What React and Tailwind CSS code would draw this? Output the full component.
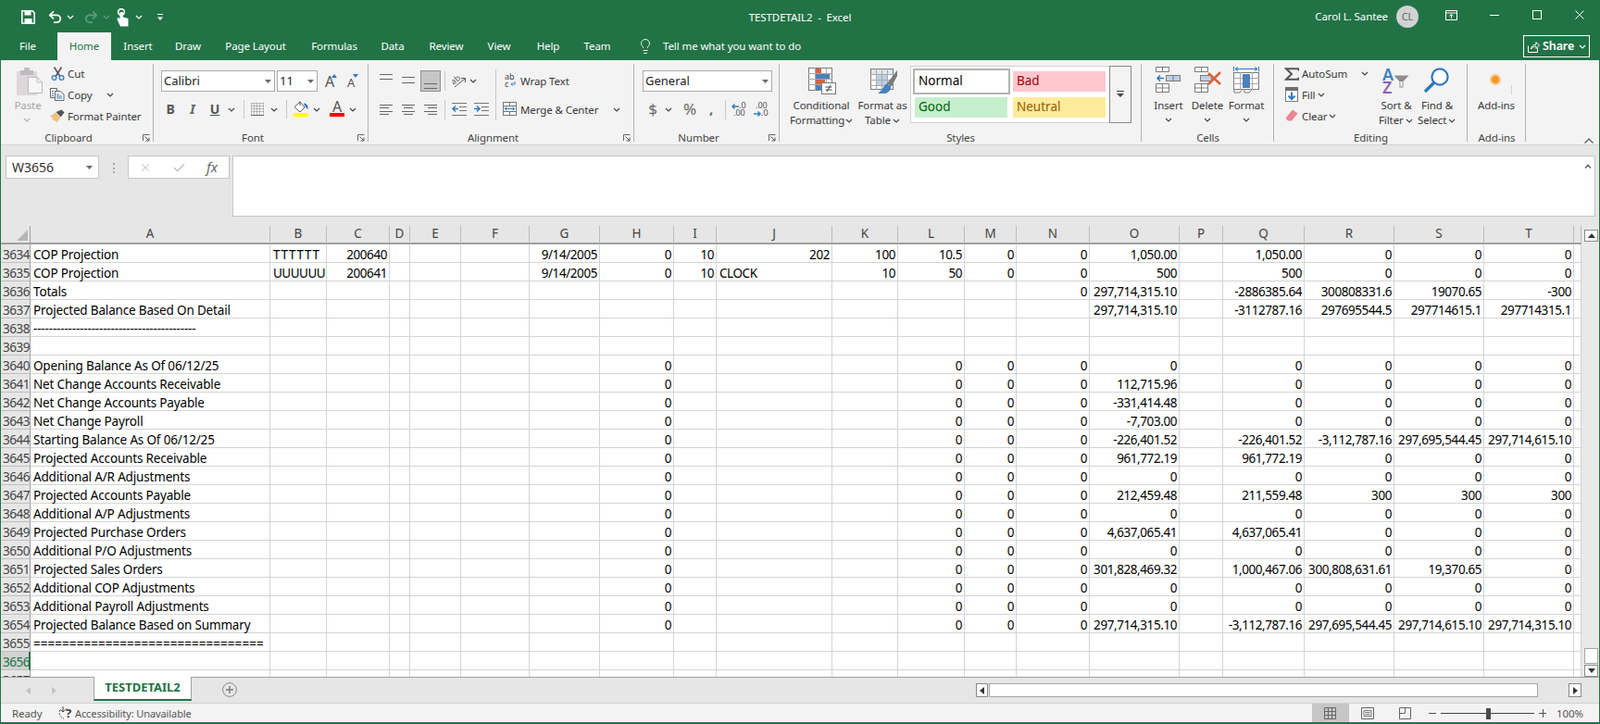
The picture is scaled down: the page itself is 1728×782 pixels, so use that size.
import React from "react";
import { Undo2, Redo2, Lightbulb, X, Check } from "lucide-react";

const L = ({ c = "", children }) => (
  <div className={"absolute whitespace-nowrap text-[11.5px] leading-[16px] tracking-[-0.1px] text-[#383838] " + c}>{children}</div>
);
const Ch = ({ c = "", light }) => (
  <svg className={"absolute " + c} width="8" height="5" viewBox="0 0 8 5">
    <path d="M1 1L4 4L7 1" fill="none" stroke={light ? "#b0b0b0" : "#444"} strokeWidth="1.2" />
  </svg>
);
const Ca = ({ c = "" }) => (
  <svg className={"absolute " + c} width="7" height="4" viewBox="0 0 7 4">
    <path d="M0 0H7L3.5 4Z" fill="#6a6a6a" />
  </svg>
);
const Ic = ({ c = "", w, h, children }) => (
  <svg className={"absolute " + c} width={w} height={h} viewBox={`0 0 ${w} ${h}`}>{children}</svg>
);
const Sep = ({ c = "" }) => <div className={"absolute w-px bg-[#c8c8c8] " + c} />;
const LinesIc = ({ c, rows, w = 14, h = 14 }) => (
  <Ic c={c} w={w} h={h}>
    {rows.map((r, i) => (
      <path key={i} d={`M${r[0]} ${r[2]}.5H${r[1]}`} stroke="#666" strokeWidth="1" />
    ))}
  </Ic>
);
const Launcher = () => (
  <Ic c="right-[4px] top-[80px]" w={8} h={8}>
    <path d="M0.5 7V0.5H7.5" fill="none" stroke="#666" />
    <path d="M2.5 2.5L7 7M7 3.5V7H3.5" fill="none" stroke="#555" />
  </Ic>
);
const Group = ({ w, label, launcher, labelC = "left-0 right-[18px]", children }) => (
  <div className={"relative h-full shrink-0 " + w}>
    {children}
    <div className="absolute right-0 top-[4px] h-[84px] w-px bg-[#b4b4b4]" />
    <div className={"absolute top-[76px] text-center text-[11.5px] leading-[16px] tracking-[-0.1px] text-[#444] " + labelC}>{label}</div>
    {launcher && <Launcher />}
  </div>
);

const BLUE = "#2f78bd";
const GR = "#7a7a7a";

function Ribbon() {
  return (
    <div className="relative flex h-[92px] border-b border-[#d2d2d2] bg-[#f3f3f3]">
      <Group w="w-[166px]" label="Clipboard" launcher>
        <Ic c="left-[18px] top-[8px]" w={28} h={30}>
          <rect x="0" y="4" width="22" height="26" rx="1" fill="#dcd8db" />
          <rect x="4" y="3" width="14" height="5" fill="#bfbbbe" />
          <rect x="8" y="0" width="6" height="4" rx="1" fill="#bfbbbe" />
          <path d="M12.5 10.5H22L27.5 16V27.5H12.5Z" fill="#f8f7f8" stroke="#bcbabc" />
          <path d="M22 10.5V16H27.5" fill="none" stroke="#bcbabc" />
        </Ic>
        <L c="left-[30px] -translate-x-1/2 top-[41px] !text-[#a6a6a6]">Paste</L>
        <Ch light c="left-[25px] top-[62px]" />
        <Ic c="left-[55px] top-[7px]" w={15} h={15}>
          <path d="M3.5 0.5L9.5 10M11.5 0.5L5.5 10" stroke="#555" strokeWidth="1.6" fill="none" />
          <circle cx="3.5" cy="12" r="2.4" fill="none" stroke={BLUE} strokeWidth="1.2" />
          <circle cx="11.5" cy="12" r="2.4" fill="none" stroke={BLUE} strokeWidth="1.2" />
        </Ic>
        <L c="left-[73px] top-[7px]">Cut</L>
        <Ic c="left-[54px] top-[30px]" w={16} h={14}>
          <path d="M0.5 0.5H7.5V3M5 10.5H0.5V0.5" fill="none" stroke="#666" />
          <path d="M5.5 3.5H11L15 7V13.5H5.5Z" fill="#fff" stroke="#666" />
          <path d="M2 3.5H4M2 6H4M2 8.5H4M7 7H10M7 9H13M7 11H13" stroke={BLUE} />
        </Ic>
        <L c="left-[73px] top-[30px]">Copy</L>
        <Ch c="left-[115px] top-[35px]" />
        <Ic c="left-[54px] top-[53px]" w={16} h={15}>
          <path d="M0 7.5L6 3.5L11 9L7.5 14.5L4 11.5L2.5 12L3 9.5Z" fill="#eec07c" />
          <path d="M6.5 3L12.5 0.5L15.5 3.5L11.5 8.5Z" fill="#555" />
        </Ic>
        <L c="left-[73px] top-[53px]">Format Painter</L>
      </Group>

      <Group w="w-[232px]" label="Font" launcher>
        <div className="absolute left-[8px] top-[11px] h-[23px] w-[123px] border border-[#ababab] bg-white pl-[2px] font-['Lato',sans-serif] text-[13px] leading-[21px] text-[#222]">Calibri</div>
        <Ca c="left-[120px] top-[21px]" />
        <div className="absolute left-[133px] top-[11px] h-[23px] w-[44px] border border-[#ababab] bg-white pl-[2px] font-['Lato',sans-serif] text-[13px] leading-[21px] text-[#222]">11</div>
        <Ca c="left-[166px] top-[21px]" />
        <L c="left-[190px] -translate-x-1/2 top-[15px] !text-[16px] !text-[#555]">A</L>
        <Ic c="left-[192px] top-[15px]" w={6} h={4}><path d="M0 4L3 0L6 4Z" fill={BLUE} /></Ic>
        <L c="left-[213px] -translate-x-1/2 top-[16px] !text-[13px] !text-[#555]">A</L>
        <Ic c="left-[215px] top-[15px]" w={6} h={4}><path d="M0 0H6L3 4Z" fill={BLUE} /></Ic>
        <L c="left-[18px] -translate-x-1/2 top-[45px] !text-[14px] font-bold !text-[#555]">B</L>
        <L c="left-[42px] -translate-x-1/2 top-[45px] !text-[14px] font-bold italic !text-[#666]">I</L>
        <L c="left-[66px] -translate-x-1/2 top-[45px] !text-[14px] font-bold underline !text-[#555]">U</L>
        <Ch c="left-[80px] top-[51px]" />
        <Sep c="left-[97px] top-[43px] h-[20px]" />
        <Ic c="left-[105px] top-[46px]" w={14} h={14}>
          <path d="M0.5 0.5H13.5M0.5 3.5H13.5M0.5 6.5H13.5M0.5 9.5H13.5M0.5 0.5V13M3.5 0.5V13M6.5 0.5V13M9.5 0.5V13M13.5 0.5V13" stroke="#8a8a8a" strokeDasharray="1 1" fill="none" />
          <path d="M0 13.5H14" stroke="#666" />
        </Ic>
        <Ch c="left-[126px] top-[51px]" />
        <Sep c="left-[143px] top-[43px] h-[20px]" />
        <Ic c="left-[151px] top-[44px]" w={17} h={13}>
          <path d="M1 6.5L7 1L12 7L7 12Z" fill="#fff" stroke="#555" />
          <path d="M7 0.5V5" stroke="#555" />
          <path d="M11 2.5C14 2.5 16 5 15.5 9C14 8 12 6 11 2.5Z" fill={BLUE} />
        </Ic>
        <div className="absolute left-[151px] top-[57px] h-[4px] w-[16px] bg-[#ffff00]" />
        <Ch c="left-[172px] top-[51px]" />
        <L c="left-[198px] -translate-x-1/2 top-[42px] !text-[16px] !text-[#555]">A</L>
        <div className="absolute left-[190px] top-[57px] h-[4px] w-[16px] bg-[#ff0000]" />
        <Ch c="left-[211px] top-[51px]" />
      </Group>

      <Group w="w-[287px]" label="Alignment" launcher>
        <LinesIc c="left-[12px] top-[12px]" rows={[[0, 14, 3], [0, 14, 8]]} />
        <LinesIc c="left-[36px] top-[15px]" rows={[[0, 14, 3], [0, 14, 9]]} />
        <div className="absolute left-[56px] top-[11px] h-[23px] w-[22px] border border-[#8e8e8e] bg-[#c6c6c6]" />
        <LinesIc c="left-[60px] top-[18px]" rows={[[0, 14, 7], [0, 14, 12]]} />
        <Sep c="left-[82px] top-[12px] h-[21px]" />
        <Ic c="left-[90px] top-[15px]" w={16} h={15}>
          <text x="0" y="9" fontSize="9" fill="#555" transform="rotate(-40 5 8)" fontFamily="Open Sans, sans-serif">ab</text>
          <path d="M3 14L14 5M10 4.5H14.5V9" fill="none" stroke="#555" />
        </Ic>
        <Ch c="left-[109px] top-[20px]" />
        <Sep c="left-[137px] top-[10px] h-[55px]" />
        <div className="absolute left-[147px] top-[14px] w-[12px] font-['Open_Sans',sans-serif] text-[9px] leading-[8px] text-[#444]">ab<br />c</div>
        <Ic c="left-[153px] top-[23px]" w={6} h={6}><path d="M5 0V3H1M2.5 1.5L1 3L2.5 4.5" fill="none" stroke={BLUE} /></Ic>
        <L c="left-[164px] top-[15px]">Wrap Text</L>
        <LinesIc c="left-[12px] top-[47px]" rows={[[0, 14, 1], [0, 10, 4], [0, 14, 8], [0, 10, 11]]} />
        <LinesIc c="left-[36px] top-[47px]" rows={[[0, 14, 1], [2, 12, 4], [0, 14, 8], [2, 12, 11]]} />
        <LinesIc c="left-[60px] top-[47px]" rows={[[0, 14, 1], [4, 14, 4], [0, 14, 8], [4, 14, 11]]} />
        <Sep c="left-[82px] top-[43px] h-[21px]" />
        <Ic c="left-[90px] top-[46px]" w={16} h={14}>
          <path d="M0 .5H16M8 4.5H16M8 8.5H16M0 13.5H16" stroke="#777" />
          <path d="M7 6.5H1M4 3.5L1 6.5L4 9.5" fill="none" stroke={BLUE} strokeWidth="1.5" />
        </Ic>
        <Ic c="left-[114px] top-[46px]" w={16} h={14}>
          <path d="M0 .5H16M8 4.5H16M8 8.5H16M0 13.5H16" stroke="#777" />
          <path d="M0 6.5H6M3 3.5L6 6.5L3 9.5" fill="none" stroke={BLUE} strokeWidth="1.5" />
        </Ic>
        <Ic c="left-[145px] top-[45px]" w={15} h={15}>
          <rect x=".5" y=".5" width="14" height="14" fill="#fff" stroke="#777" />
          <path d="M0 4.5H15M0 10.5H15M7.5 0V4M7.5 11V15" stroke="#777" />
          <path d="M2.5 7.5H12.5M4.5 5.5L2.5 7.5L4.5 9.5M10.5 5.5L12.5 7.5L10.5 9.5" fill="none" stroke={BLUE} />
        </Ic>
        <L c="left-[164px] top-[46px]">Merge &amp; Center</L>
        <Ch c="left-[264px] top-[51px]" />
      </Group>

      <Group w="w-[157px]" label="Number" launcher>
        <div className="absolute left-[9px] top-[11px] h-[23px] w-[140px] border border-[#ababab] bg-white pl-[2px] font-['Lato',sans-serif] text-[13px] leading-[21px] text-[#222]">General</div>
        <Ca c="left-[138px] top-[21px]" />
        <L c="left-[20px] -translate-x-1/2 top-[45px] !text-[17px] !text-[#666]">$</L>
        <Ch c="left-[33px] top-[51px]" />
        <L c="left-[60px] -translate-x-1/2 top-[45px] !text-[17px] !text-[#666]">%</L>
        <L c="left-[83px] -translate-x-1/2 top-[44px] !text-[15px] font-bold !text-[#666]">,</L>
        <Sep c="left-[98px] top-[43px] h-[21px]" />
        <Ic c="left-[105px] top-[47px]" w={8} h={6}><path d="M8 3H1M3.5 .5L1 3L3.5 5.5" fill="none" stroke={BLUE} strokeWidth="1.4" /></Ic>
        <div className="absolute left-[113px] top-[45px] font-['Open_Sans',sans-serif] text-[9px] leading-[8px] text-[#555]">.0</div>
        <div className="absolute left-[107px] top-[53px] font-['Open_Sans',sans-serif] text-[9px] leading-[8px] text-[#555]">.00</div>
        <div className="absolute left-[131px] top-[45px] font-['Open_Sans',sans-serif] text-[9px] leading-[8px] text-[#555]">.00</div>
        <Ic c="left-[129px] top-[55px]" w={8} h={6}><path d="M0 3H7M4.5 .5L7 3L4.5 5.5" fill="none" stroke={BLUE} strokeWidth="1.4" /></Ic>
        <div className="absolute left-[137px] top-[53px] font-['Open_Sans',sans-serif] text-[9px] leading-[8px] text-[#555]">.0</div>
      </Group>

      <Group w="w-[391px]" label="Styles" labelC="left-0 right-0">
        <Ic c="left-[31px] top-[8px]" w={30} h={29}>
          <rect x=".5" y=".5" width="25" height="24" fill="#fff" stroke={GR} />
          <path d="M0 6.5H26M0 12.5H26M0 18.5H26M7.5 0V25M13.5 0V25M19.5 0V25" stroke="#a8a8a8" />
          <rect x="8" y="1" width="6" height="5" fill="#d9623c" />
          <rect x="8" y="7" width="15" height="5" fill="#4a80bd" />
          <rect x="8" y="13" width="10" height="5" fill="#d9623c" />
          <rect x="8" y="19" width="6" height="5" fill="#4a80bd" />
          <rect x="14.5" y="16.5" width="15" height="12" fill="#fff" stroke={GR} />
          <path d="M18.5 21H25.5M18.5 24H25.5M24 19L20 26" stroke="#444" fill="none" />
        </Ic>
        <L c="left-[45px] -translate-x-1/2 top-[41px]">Conditional</L>
        <L c="left-[11px] top-[57px]">Formatting</L>
        <Ch c="left-[71px] top-[63px]" />
        <Ic c="left-[98px] top-[9px]" w={29} h={28}>
          <rect x=".5" y=".5" width="24" height="22" fill="#fff" stroke={GR} />
          <rect x="1" y="1" width="23" height="5" fill="#dce6f2" />
          <rect x="6" y="7" width="13" height="11" fill="#bcd0e8" />
          <path d="M0 6.5H25M0 12.5H25M0 18.5H25M6.5 0V23M12.5 0V23M18.5 0V23" stroke="#a8a8a8" />
          <path d="M18 16L25 7L29 2V8L23 19Z" fill="#7a7a7a" />
          <path d="M18 16C14 18 13 24 8 27H16C20 26 23 22 22 19Z" fill="#4a80bd" />
        </Ic>
        <L c="left-[111px] -translate-x-1/2 top-[41px]">Format as</L>
        <L c="left-[92px] top-[57px]">Table</L>
        <Ch c="left-[122px] top-[63px]" />
        <div className="absolute left-[141px] top-[6px] h-[62px] w-[216px] border border-[#d2d2d2] bg-white" />
        <div className="absolute left-[356px] top-[6px] h-[62px] w-[24px] border border-[#8a8a8a] bg-[#f3f3f3]" />
        <Ic c="left-[364px] top-[33px]" w={8} h={8}>
          <path d="M0 .5H8" stroke="#444" /><path d="M0 3L4 7L8 3Z" fill="#444" />
        </Ic>
        <div className="absolute left-[144px] top-[9px] flex h-[28px] w-[105px] items-center border-2 border-[#b3b3b0] bg-white pb-[1px] pl-[4px] font-['Lato',sans-serif] text-[13.5px] text-black">Normal</div>
        <div className="absolute left-[252px] top-[12px] flex h-[22px] w-[100px] items-center bg-[#ffc7ce] pb-[1px] pl-[4px] font-['Lato',sans-serif] text-[13.5px] text-[#9c0006]">Bad</div>
        <div className="absolute left-[146px] top-[40px] flex h-[22px] w-[100px] items-center bg-[#c6efce] pb-[1px] pl-[4px] font-['Lato',sans-serif] text-[13.5px] text-[#006100]">Good</div>
        <div className="absolute left-[252px] top-[40px] flex h-[22px] w-[100px] items-center bg-[#ffeb9c] pb-[1px] pl-[4px] font-['Lato',sans-serif] text-[13.5px] text-[#9c5700]">Neutral</div>
      </Group>

      <Group w="w-[143px]" label="Cells" labelC="left-0 right-0">
        <Ic c="left-[15px] top-[7px]" w={27} h={28}>
          <path d="M.5 .5H14.5V5.5H.5ZM7.5 .5V5.5" fill="#fff" stroke={GR} />
          <rect x="11.5" y="9.5" width="15" height="6" fill="#bcd0e8" stroke={GR} />
          <path d="M19 9.5V15.5" stroke={GR} />
          <path d="M9 12.5H2M5 9.5L2 12.5L5 15.5" fill="none" stroke={BLUE} strokeWidth="1.6" />
          <path d="M.5 18.5H14.5V27.5H.5ZM.5 23H14.5M7.5 18.5V27.5" fill="#fff" stroke={GR} />
        </Ic>
        <L c="left-[29px] -translate-x-1/2 top-[41px]">Insert</L>
        <Ch c="left-[25px] top-[62px]" />
        <Ic c="left-[57px] top-[7px]" w={30} h={28}>
          <path d="M.5 .5H14.5V5.5H.5ZM7.5 .5V5.5" fill="#fff" stroke={GR} />
          <rect x="6.5" y="9.5" width="12" height="6" fill="#bcd0e8" stroke={GR} />
          <path d="M.5 18.5H14.5V27.5H.5ZM.5 23H14.5M7.5 18.5V27.5" fill="#fff" stroke={GR} />
          <path d="M15 7L28 19M28 6L15 19" stroke="#d9623c" strokeWidth="2.6" />
        </Ic>
        <L c="left-[71px] -translate-x-1/2 top-[41px]">Delete</L>
        <Ch c="left-[67px] top-[62px]" />
        <Ic c="left-[99px] top-[7px]" w={28} h={29}>
          <path d="M.5 0V5M27.5 0V5M2 2.5H26M5 .5L2 2.5L5 4.5M23 .5L26 2.5L23 4.5" fill="none" stroke={BLUE} />
          <rect x=".5" y="6.5" width="27" height="18" fill="#fff" stroke={GR} />
          <path d="M0 12.5H28M0 18.5H28M7.5 6V25M20.5 6V25" stroke="#a8a8a8" />
          <rect x="10" y="8" width="8" height="15" fill="#4a80bd" />
          <path d="M1 25V28H7L9 25M12 25V28H17L20 25" fill="#fff" stroke={GR} />
        </Ic>
        <L c="left-[113px] -translate-x-1/2 top-[41px]">Format</L>
        <Ch c="left-[109px] top-[62px]" />
      </Group>

      <Group w="w-[209px]" label="Editing" labelC="left-0 right-0">
        <Ic c="left-[11px] top-[8px]" w={16} h={14}>
          <path d="M15.5 3.5V1.2H2L8 7L2 12.8H15.5V10.5" fill="none" stroke="#555" strokeWidth="2" />
        </Ic>
        <L c="left-[30px] top-[7px]">AutoSum</L>
        <Ch c="left-[94px] top-[12px]" />
        <Ic c="left-[12px] top-[29px]" w={14} h={16}>
          <rect x=".5" y=".5" width="13" height="15" fill="#fff" stroke={GR} />
          <rect x="0" y="0" width="14" height="4" fill="#6d6d6d" />
          <path d="M7 5.5V13M3.5 9.5L7 13L10.5 9.5" fill="none" stroke={BLUE} strokeWidth="2" />
        </Ic>
        <L c="left-[30px] top-[30px]">Fill</L>
        <Ch c="left-[47px] top-[35px]" />
        <Ic c="left-[12px] top-[53px]" w={14} h={13}>
          <path d="M8 0.5L13.5 4.5L7 12.5H3L0.5 9.5Z" fill="#ea8593" />
        </Ic>
        <L c="left-[30px] top-[53px]">Clear</L>
        <Ch c="left-[59px] top-[58px]" />
        <div className="absolute left-[117px] top-[5px] font-['Open_Sans',sans-serif] text-[18px] font-semibold leading-[20px] text-[#3f7fc4]">A</div>
        <div className="absolute left-[117px] top-[19px] font-['Open_Sans',sans-serif] text-[18px] font-semibold leading-[20px] text-[#8e5fb3]">Z</div>
        <Ic c="left-[129px] top-[16px]" w={17} h={14}>
          <path d="M.5 .5H16.5L10.5 7V13.5H6.5V7Z" fill="#8d8d8d" />
          <path d="M7.5 7V12.5H9.5V7" fill="#fff" />
        </Ic>
        <L c="left-[132px] -translate-x-1/2 top-[41px]">Sort &amp;</L>
        <L c="left-[113px] top-[57px]">Filter</L>
        <Ch c="left-[142px] top-[63px]" />
        <Ic c="left-[162px] top-[8px]" w={27} h={27}>
          <circle cx="17" cy="10" r="8.6" fill="#fff" stroke={BLUE} strokeWidth="2.2" />
          <path d="M10.5 16.5L2 25" stroke={BLUE} strokeWidth="3.4" strokeLinecap="round" />
        </Ic>
        <L c="left-[176px] -translate-x-1/2 top-[41px]">Find &amp;</L>
        <L c="left-[155px] top-[57px]">Select</L>
        <Ch c="left-[188px] top-[63px]" />
      </Group>

      <Group w="w-[63px]" label="Add-ins" labelC="left-0 right-0">
        <div className="absolute left-[25px] top-[16px] h-[10px] w-[10px] rounded-full bg-[#f7941d] blur-[1px]" />
        <div className="absolute left-[47px] top-[27px] h-[10px] w-px border-l border-dashed border-[#cfcfcf]" />
        <L c="left-[31px] -translate-x-1/2 top-[41px]">Add-ins</L>
      </Group>

      <Ic c="left-[1711px] top-[84px]" w={10} h={6}>
        <path d="M.5 5.5L5 1L9.5 5.5" fill="none" stroke="#555" strokeWidth="1.2" />
      </Ic>
    </div>
  );
}

function Header() {
  return (
    <div className="relative h-[65px] bg-[#217346] text-white">
      <Ic c="left-[23px] top-[11px]" w={15} h={15}>
        <path d="M.8 .8H12L14.2 3V14.2H.8Z" fill="none" stroke="#fff" strokeWidth="1.6" />
        <rect x="3.5" y="1" width="7" height="4.5" fill="#fff" />
        <rect x="3.5" y="9" width="8" height="5" fill="#fff" />
      </Ic>
      <Undo2 className="absolute left-[51px] top-[10px]" size={17} strokeWidth={2.6} color="#fff" />
      <svg className="absolute left-[72px] top-[16px]" width="8" height="5" viewBox="0 0 8 5"><path d="M1 1L4 4L7 1" fill="none" stroke="#fff" strokeWidth="1.2" /></svg>
      <Redo2 className="absolute left-[90px] top-[10px]" size={17} strokeWidth={2.6} color="#5f9a7d" />
      <svg className="absolute left-[111px] top-[16px]" width="8" height="5" viewBox="0 0 8 5"><path d="M1 1L4 4L7 1" fill="none" stroke="#5f9a7d" strokeWidth="1.2" /></svg>
      <Ic c="left-[126px] top-[9px]" w={13} h={20}>
        <circle cx="5" cy="4" r="3.4" fill="none" stroke="#fff" strokeWidth="1.6" />
        <path d="M3.5 4V11L1 10L0.5 12L4 19.5H12.5V11L7 9.5V4Z" fill="#fff" />
      </Ic>
      <svg className="absolute left-[146px] top-[16px]" width="8" height="5" viewBox="0 0 8 5"><path d="M1 1L4 4L7 1" fill="none" stroke="#fff" strokeWidth="1.2" /></svg>
      <Ic c="left-[170px] top-[15px]" w={6} h={8}>
        <path d="M0 .5H6" stroke="#fff" /><path d="M0 3.5H6L3 7Z" fill="#fff" />
      </Ic>
      <L c="left-[864px] -translate-x-1/2 top-[11px] !text-white whitespace-pre">TESTDETAIL2  -  Excel</L>
      <L c="left-[1499px] -translate-x-full top-[10px] !text-white">Carol L. Santee</L>
      <div className="absolute left-[1508px] top-[6px] flex h-[24px] w-[24px] items-center justify-center rounded-full bg-[#d2d2d2] text-[11px] text-[#666]">CL</div>
      <Ic c="left-[1561px] top-[11px]" w={13} h={11}>
        <path d="M.5 .5H12.5V10.5H.5ZM.5 3H12.5" fill="none" stroke="#fff" />
        <path d="M6.5 9V4.5M4.5 6.5L6.5 4.5L8.5 6.5" fill="none" stroke="#fff" />
      </Ic>
      <div className="absolute left-[1609px] top-[16px] h-px w-[10px] bg-white" />
      <div className="absolute left-[1655px] top-[11px] h-[10px] w-[10px] border border-white" />
      <Ic c="left-[1701px] top-[11px]" w={10} h={10}>
        <path d="M.5 .5L9.5 9.5M9.5 .5L.5 9.5" stroke="#fff" />
      </Ic>
      <div className="absolute left-[62px] top-[35px] h-[30px] w-[58px] bg-[#f3f3f3]" />
      <L c="left-[30px] -translate-x-1/2 top-[42px] !text-white">File</L>
      <L c="left-[91px] -translate-x-1/2 top-[42px] !text-[#217346]">Home</L>
      <L c="left-[149px] -translate-x-1/2 top-[42px] !text-white">Insert</L>
      <L c="left-[203px] -translate-x-1/2 top-[42px] !text-white">Draw</L>
      <L c="left-[276px] -translate-x-1/2 top-[42px] !text-white">Page Layout</L>
      <L c="left-[361px] -translate-x-1/2 top-[42px] !text-white">Formulas</L>
      <L c="left-[424px] -translate-x-1/2 top-[42px] !text-white">Data</L>
      <L c="left-[482px] -translate-x-1/2 top-[42px] !text-white">Review</L>
      <L c="left-[539px] -translate-x-1/2 top-[42px] !text-white">View</L>
      <L c="left-[592px] -translate-x-1/2 top-[42px] !text-white">Help</L>
      <L c="left-[645px] -translate-x-1/2 top-[42px] !text-white">Team</L>
      <Lightbulb className="absolute left-[688px] top-[41px]" size={18} strokeWidth={1.2} color="#fff" />
      <L c="left-[716px] top-[42px] !text-white">Tell me what you want to do</L>
      <div className="absolute left-[1645px] top-[38px] h-[24px] w-[72px] border border-white" />
      <Ic c="left-[1650px] top-[44px]" w={13} h={13}>
        <path d="M.5 5.5V12.5H10.5V8" fill="none" stroke="#fff" />
        <path d="M3.5 9C4 6 6 4 9 4V1.5L12.5 5L9 8.5V6C7 6 5 7 3.5 9Z" fill="none" stroke="#fff" />
      </Ic>
      <L c="left-[1666px] top-[42px] !text-white !text-[12.5px] font-semibold">Share</L>
      <svg className="absolute left-[1705px] top-[48px]" width="8" height="5" viewBox="0 0 8 5"><path d="M1 1L4 4L7 1" fill="none" stroke="#fff" strokeWidth="1.2" /></svg>
    </div>
  );
}

function FormulaBar() {
  return (
    <div className="relative h-[87px] bg-[#e6e6e6]">
      <div className="absolute left-[6px] top-[11px] h-[25px] w-[101px] border border-[#c6c6c6] bg-white pl-[6px] font-['Lato',sans-serif] text-[14px] leading-[23px] text-[#333]">W3656</div>
      <Ca c="left-[93px] top-[22px]" />
      <div className="absolute left-[122px] top-[19px] flex h-[11px] w-[2px] flex-col justify-between">
        <div className="h-[2px] w-[2px] bg-[#aaa]" /><div className="h-[2px] w-[2px] bg-[#aaa]" /><div className="h-[2px] w-[2px] bg-[#aaa]" />
      </div>
      <div className="absolute left-[138px] top-[11px] h-[25px] w-[110px] border border-[#c6c6c6] bg-white" />
      <X className="absolute left-[150px] top-[17px]" size={14} strokeWidth={1.6} color="#bdbdbd" />
      <Check className="absolute left-[186px] top-[17px]" size={15} strokeWidth={2.2} color="#bdbdbd" />
      <div className="absolute left-[229px] top-[14px] -translate-x-1/2 font-['Liberation_Serif',serif] text-[15px] italic leading-[18px] text-[#666]">fx</div>
      <div className="absolute left-[251px] top-[11px] h-[66px] w-[1472px] border border-[#c6c6c6] bg-white" />
      <Ic c="left-[1711px] top-[20px]" w={8} h={5}>
        <path d="M1 4.5L4 1.5L7 4.5" fill="none" stroke="#666" strokeWidth="1.6" />
      </Ic>
    </div>
  );
}

const COLS = ["A","B","C","D","E","F","G","H","I","J","K","L","M","N","O","P","Q","R","S","T","U"];
const Z = { H: "0", L: "0", M: "0", N: "0" };
const sum = (A, O, Q = "0", R = "0", S = "0", T = "0") => ({ A, ...Z, O, Q, R, S, T });
const DATA = {
  3634: { A: "COP Projection", B: "TTTTTT", C: "200640", G: "9/14/2005", H: "0", I: "10", J: "202", K: "100", L: "10.5", M: "0", N: "0", O: "1,050.00", Q: "1,050.00", R: "0", S: "0", T: "0" },
  3635: { A: "COP Projection", B: "UUUUUU", C: "200641", G: "9/14/2005", H: "0", I: "10", J: "CLOCK", K: "10", L: "50", M: "0", N: "0", O: "500", Q: "500", R: "0", S: "0", T: "0" },
  3636: { A: "Totals", N: "0", O: "297,714,315.10", Q: "-2886385.64", R: "300808331.6", S: "19070.65", T: "-300" },
  3637: { A: "Projected Balance Based On Detail", O: "297,714,315.10", Q: "-3112787.16", R: "297695544.5", S: "297714615.1", T: "297714315.1" },
  3638: { A: "------------------------------------------" },
  3639: {},
  3640: sum("Opening Balance As Of 06/12/25", "0"),
  3641: sum("Net Change Accounts Receivable", "112,715.96"),
  3642: sum("Net Change Accounts Payable", "-331,414.48"),
  3643: sum("Net Change Payroll", "-7,703.00"),
  3644: sum("Starting Balance As Of 06/12/25", "-226,401.52", "-226,401.52", "-3,112,787.16", "297,695,544.45", "297,714,615.10"),
  3645: sum("Projected Accounts Receivable", "961,772.19", "961,772.19"),
  3646: sum("Additional A/R Adjustments", "0"),
  3647: sum("Projected Accounts Payable", "212,459.48", "211,559.48", "300", "300", "300"),
  3648: sum("Additional A/P Adjustments", "0"),
  3649: sum("Projected Purchase Orders", "4,637,065.41", "4,637,065.41"),
  3650: sum("Additional P/O Adjustments", "0"),
  3651: sum("Projected Sales Orders", "301,828,469.32", "1,000,467.06", "300,808,631.61", "19,370.65"),
  3652: sum("Additional COP Adjustments", "0"),
  3653: sum("Additional Payroll Adjustments", "0"),
  3654: sum("Projected Balance Based on Summary", "297,714,315.10", "-3,112,787.16", "297,695,544.45", "297,714,615.10", "297,714,315.10"),
  3655: { A: "================================" },
  3656: {},
  3657: {},
};

const cellFit = (c, v) => {
  if (v === "TTTTTT") return "pl-[3px] text-left tracking-[0.7px]";
  if (v === "UUUUUU") return "pl-[3px] text-left tracking-[-0.5px]";
  if (v === "CLOCK") return "pl-[3px] text-left tracking-[-0.42px]";
  if (c === "A" && v && v[0] === "=") return "pl-[3px] text-left tracking-[0.05px]";
  if (c === "A") return "pl-[3px] text-left tracking-[-0.17px]";
  return "flex justify-end pr-[2px] tracking-[-0.42px]";
};

function Sheet() {
  return (
    <div className="relative h-[487px] w-[1708px] overflow-hidden bg-white font-['Lato',sans-serif] text-[13.5px]">
      <div className="grid grid-cols-[33px_259px_61px_68px_22px_55px_74px_76px_80px_46px_125px_71px_72px_56px_79px_97px_47px_88px_97px_97px_97px_8px] auto-rows-[20px]">
        <div className="relative border-r border-b-2 border-[#a0a0a0] bg-[#e6e6e6]">
          <Ic c="left-[18px] top-[4px]" w={12} h={12}><path d="M12 0V12H0Z" fill="#b6b6b6" /></Ic>
        </div>
        {COLS.map((c) => (
          <div key={c} className="border-r border-b-2 border-r-[#bcbcbc] border-b-[#a0a0a0] bg-[#e6e6e6] text-center leading-[17px] text-[#444]">{c === "U" ? "" : c}</div>
        ))}
        {Object.keys(DATA).map((n) => {
          const sel = n === "3656";
          return (
            <React.Fragment key={n}>
              <div className={sel
                ? "border-r-2 border-b border-r-[#217346] border-b-[#c0c0c0] bg-[#d2d2d2] pl-[3px] text-left leading-[22px] tracking-[-0.5px] text-[#217346]"
                : "border-r border-b border-r-[#9f9f9f] border-b-[#c0c0c0] bg-[#e6e6e6] pl-[3px] text-left leading-[22px] tracking-[-0.5px] text-[#444]"}>{n}</div>
              {COLS.map((c) => {
                const v = DATA[n][c];
                return (
                  <div key={c} className={"whitespace-nowrap border-r border-b border-[#d4d4d4] leading-[22px] text-black " + cellFit(c, v)}>{v}</div>
                );
              })}
            </React.Fragment>
          );
        })}
      </div>
    </div>
  );
}

function VScroll() {
  return (
    <div className="relative h-[487px] w-[20px] bg-[#e9e9e9]">
      <div className="absolute left-[3px] top-[4px] h-[13px] w-[15px] border border-[#8a8a8a] bg-white" />
      <Ic c="left-[7px] top-[8px]" w={8} h={5}><path d="M0 5L4 0L8 5Z" fill="#333" /></Ic>
      <div className="absolute left-[3px] top-[456px] h-[17px] w-[15px] border border-[#a6a6a6] bg-white" />
      <div className="absolute left-[3px] top-[474px] h-[13px] w-[15px] border border-[#8a8a8a] bg-white" />
      <Ic c="left-[7px] top-[478px]" w={8} h={5}><path d="M0 0H8L4 5Z" fill="#333" /></Ic>
    </div>
  );
}

function Tabs() {
  return (
    <div className="relative h-[28px] border-t border-[#a0a0a0] bg-[#e6e6e6]">
      <Ic c="left-[28px] top-[10px]" w={5} h={8}><path d="M5 0V8L0 4Z" fill="#c2c2c2" /></Ic>
      <Ic c="left-[56px] top-[10px]" w={5} h={8}><path d="M0 0V8L5 4Z" fill="#c2c2c2" /></Ic>
      <div className="absolute left-[101px] top-[-1px] flex h-[26px] w-[106px] items-center justify-center border-x border-b-2 border-x-[#a0a0a0] border-b-[#217346] bg-white font-['Lato',sans-serif] text-[13px] font-bold text-[#217346]">TESTDETAIL2</div>
      <Ic c="left-[240px] top-[5px]" w={16} h={16}>
        <circle cx="8" cy="8" r="7.4" fill="none" stroke="#8a8a8a" />
        <path d="M8 4V12M4 8H12" stroke="#7a7a7a" strokeWidth="1.4" />
      </Ic>
      <div className="absolute left-[1054px] top-[6px] h-[15px] w-[13px] border border-[#8a8a8a] bg-white" />
      <Ic c="left-[1058px] top-[10px]" w={5} h={8}><path d="M5 0V8L0 4Z" fill="#333" /></Ic>
      <div className="absolute left-[1068px] top-[6px] h-[15px] w-[593px] border border-[#a6a6a6] bg-white" />
      <div className="absolute left-[1694px] top-[6px] h-[15px] w-[14px] border border-[#8a8a8a] bg-white" />
      <Ic c="left-[1699px] top-[10px]" w={5} h={8}><path d="M0 0V8L5 4Z" fill="#333" /></Ic>
    </div>
  );
}

function Status() {
  return (
    <div className="relative h-[23px] border-t border-[#d2d2d2] bg-[#f3f3f3]">
      <L c="left-[13px] top-[3px] !text-[#555]">Ready</L>
      <Ic c="left-[62px] top-[3px]" w={17} h={15}>
        <path d="M3 4A6 6 0 0 0 7 13" fill="none" stroke="#444" strokeDasharray="2 1.4" />
        <path d="M6 0V6M3.5 3.5L6 6L8.5 3.5" fill="none" stroke="#444" />
        <path d="M9 3A6 6 0 0 1 14 6" fill="none" stroke="#444" strokeDasharray="2 1.4" />
      </Ic>
      <div className="absolute left-[71px] top-[2px] text-[13px] font-bold leading-[16px] text-[#444]">?</div>
      <L c="left-[81px] top-[3px] !text-[#555] !text-[11px]">Accessibility: Unavailable</L>
      <div className="absolute left-[1417px] top-0 h-[23px] w-[40px] bg-[#c6c6c6]" />
      <Ic c="left-[1430px] top-[4px]" w={13} h={13}>
        <path d="M.5 .5H12.5V12.5H.5ZM.5 4.5H12.5M.5 8.5H12.5M4.5 .5V12.5M8.5 .5V12.5" fill="none" stroke="#666" />
      </Ic>
      <Ic c="left-[1470px] top-[4px]" w={14} h={13}>
        <path d="M.5 .5H13.5V12.5H.5Z" fill="none" stroke="#666" />
        <path d="M3 3.5H11V9.5H3ZM4.5 5.5H9.5M4.5 7.5H9.5" fill="none" stroke="#777" />
      </Ic>
      <Ic c="left-[1511px] top-[4px]" w={13} h={13}>
        <path d="M.5 .5H12.5V12.5H.5ZM6.5 .5V6.5H.5" fill="none" stroke="#666" />
      </Ic>
      <div className="absolute left-[1543px] top-[10px] h-px w-[8px] bg-[#555]" />
      <div className="absolute left-[1556px] top-[10px] h-px w-[101px] bg-[#444]" />
      <div className="absolute left-[1605px] top-[5px] h-[12px] w-[5px] bg-[#4a4a4a]" />
      <div className="absolute left-[1662px] top-[10px] h-px w-[8px] bg-[#555]" />
      <div className="absolute left-[1666px] top-[6px] h-[9px] w-px bg-[#555]" />
      <L c="left-[1710px] -translate-x-full top-[3px] !text-[#555]">100%</L>
    </div>
  );
}

export default function App() {
  return (
    <div className="relative h-[782px] w-[1728px] overflow-hidden bg-white font-['Open_Sans',sans-serif]">
      <Header />
      <Ribbon />
      <FormulaBar />
      <div className="flex">
        <Sheet />
        <VScroll />
      </div>
      <Tabs />
      <Status />
      <div className="pointer-events-none absolute inset-0 border-x border-b-2 border-[#217346]" />
    </div>
  );
}
